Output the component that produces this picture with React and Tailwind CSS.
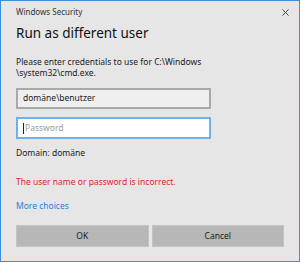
import React from "react";

export default function App() {
  return (
    <div
      className="relative w-[300px] h-[262px] bg-[#e6e6e6] border border-[#3d8fdc] flex flex-col px-[15px] text-[#1a1a1a]"
      style={{ fontFamily: '"Noto Sans", "Open Sans", sans-serif' }}
    >
      <div className="h-[23px] pt-[5px] text-[8px] leading-[12px] text-[#333]">Windows Security</div>
      <svg className="absolute left-[281px] top-[8px]" width="7" height="7" viewBox="0 0 7 7">
        <path d="M0.5 0.5 L6.5 6.5 M6.5 0.5 L0.5 6.5" stroke="#444" strokeWidth="1" />
      </svg>
      <div className="text-[13.5px] leading-[18px] text-[#111]">Run as different user</div>
      <div className="mt-[14px] text-[8.5px] leading-[11px]">
        Please enter credentials to use for C:\Windows
        <br />\system32\cmd.exe.
      </div>
      <div className="mt-[10px] w-[195px] h-[21px] border-2 border-[#a9a9a9] bg-[#efefef] flex items-center pl-[5px] text-[8.5px]">
        domäne\benutzer
      </div>
      <div className="mt-[8px] w-[195px] h-[22px] border-2 border-[#6fb1ee] bg-white flex items-center pl-[5px] text-[8.5px] text-[#9a9a9a]">
        <span className="w-px h-[11px] bg-[#222] mr-[1px]" />
        Password
      </div>
      <div className="mt-[8px] text-[8.5px] leading-[11px]">Domain: domäne</div>
      <div className="mt-[18px] text-[8.5px] leading-[11px] text-[#e0242c]">The user name or password is incorrect.</div>
      <div className="mt-[13px] text-[8.5px] leading-[11px] text-[#2b7fd4]">More choices</div>
      <div className="mt-[14px] flex gap-[3px]">
        <div className="w-[133px] h-[22px] bg-[#b7b7b7] border border-[#c4c4c4] flex items-center justify-center text-[8.5px]">OK</div>
        <div className="w-[133px] h-[22px] bg-[#b7b7b7] border border-[#c4c4c4] flex items-center justify-center text-[8.5px]">Cancel</div>
      </div>
    </div>
  );
}
